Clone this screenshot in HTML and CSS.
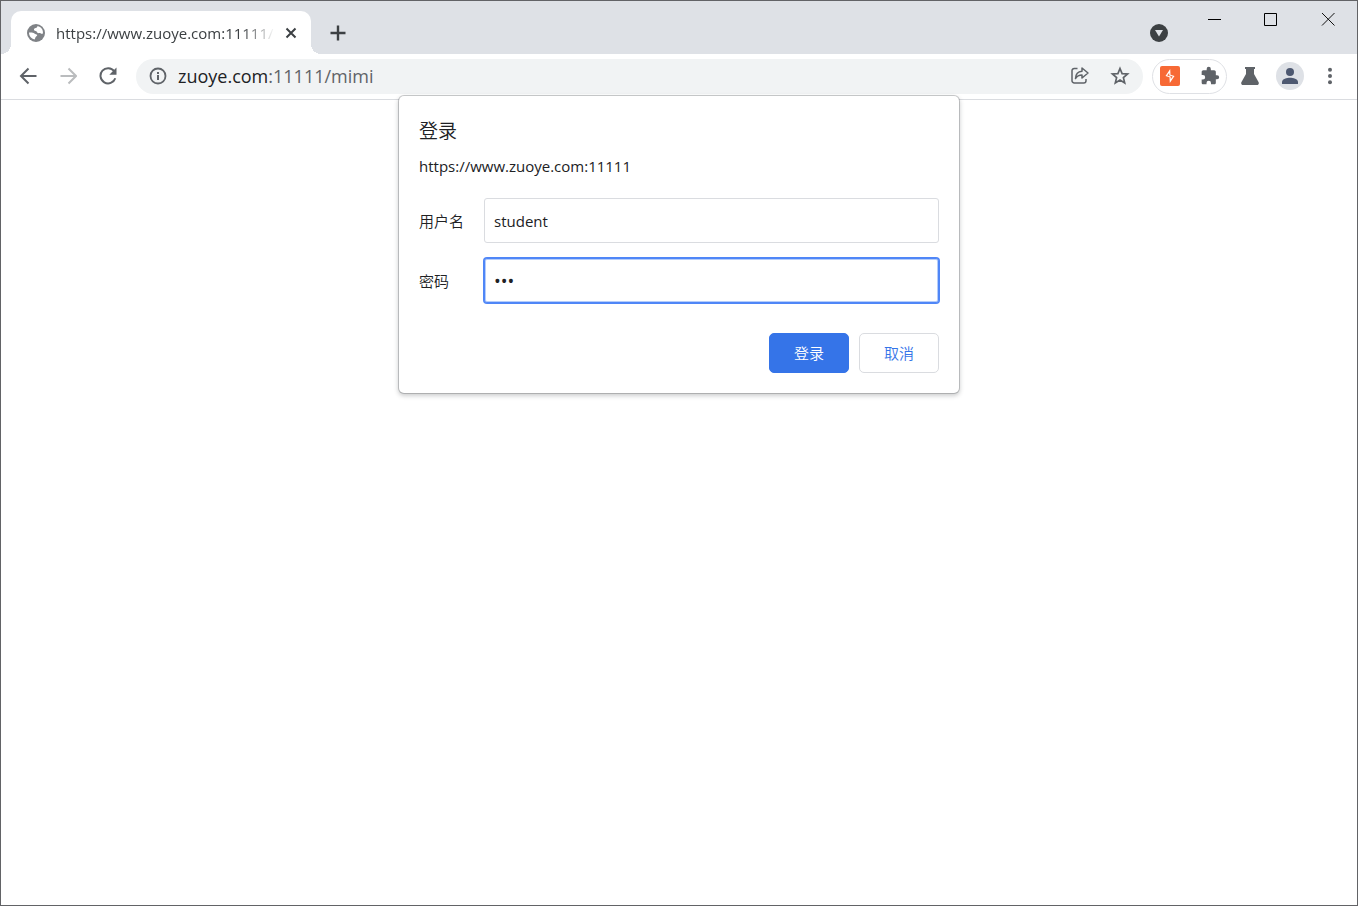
FILE: index.html
```html
<!DOCTYPE html>
<html lang="zh-CN">
<head>
<meta charset="utf-8">
<title>登录</title>
<link rel="stylesheet" href="styles.css">
</head>
<body>
<div class="window">
  <header class="tabstrip">
    <div class="tab">
      <svg class="favicon" viewBox="0 0 18 18" aria-hidden="true"><circle cx="9" cy="9" r="9" fill="#7f8286"/><path fill="#fff" d="M2 8.600C4 8.200 6.300 8.600 7.400 9.400 8.600 10.200 9.200 10 10.100 10.700 10.600 11.400 9.600 12.200 8.900 12.700 8.200 13.300 8.300 14.300 7.500 15.400 4.200 14.800 2 12.200 2 8.600ZM10.500 2.100C10.400 3.300 9.600 4 8.600 4.100 7.400 4.200 6.800 5.200 7 6 7.300 7.100 8.500 6.800 9.300 7.300 10.200 7.900 10 8.900 11 9.100 12.200 9.300 12.700 8.700 13.500 9.300 14.200 9.900 15 10 15.900 9.600 16.500 6 14.200 2.900 10.500 2.100Z"/></svg>
      <span class="tab-title">https://www.zuoye.com:11111/</span>
      <button class="icon-button tab-close" aria-label="关闭标签页"><svg width="12" height="12" viewBox="0 0 12 12"><path d="M1.500 1.500l9 9M10.500 1.500l-9 9" stroke="#3c4043" stroke-width="2" fill="none"/></svg></button>
    </div>
    <button class="icon-button new-tab" aria-label="新标签页"><svg width="16" height="16" viewBox="0 0 16 16"><path d="M8 .5v15M.5 8h15" stroke="#3c4043" stroke-width="2.400" fill="none"/></svg></button>
    <div class="spacer"></div>
    <button class="icon-button tab-search" aria-label="搜索标签页"><svg width="18" height="18" viewBox="0 0 18 18"><circle cx="9" cy="9" r="9" fill="#3c4043"/><path d="M5 6h8l-4 6.500z" fill="#dee1e6"/></svg></button>
    <div class="window-controls">
      <button class="icon-button" aria-label="最小化"><svg width="14" height="14" viewBox="0 0 14 14"><path d="M1 7.500h13" stroke="#000" fill="none"/></svg></button>
      <button class="icon-button" aria-label="最大化"><svg width="14" height="14" viewBox="0 0 14 14"><path d="M.5 1.500h12v12H.5z" stroke="#000" fill="none"/></svg></button>
      <button class="icon-button" aria-label="关闭"><svg width="14" height="14" viewBox="0 0 14 14"><path d="M1 1l12.500 12.500M13.500 1L1 13.500" stroke="#111" fill="none"/></svg></button>
    </div>
  </header>
  <nav class="toolbar">
    <div class="nav-buttons">
      <button class="icon-button" aria-label="后退"><svg width="18" height="18" viewBox="0 0 18 18"><path d="M17.500 9H2.500M9.500 1.500L2 9l7.500 7.500" stroke="#5f6368" stroke-width="2" fill="none"/></svg></button>
      <button class="icon-button" aria-label="前进"><svg width="18" height="18" viewBox="0 0 18 18"><path d="M1.500 9h15M9.500 1.500L17 9l-7.500 7.500" stroke="#babcbe" stroke-width="2" fill="none"/></svg></button>
      <button class="icon-button" aria-label="重新加载"><svg width="18" height="18" viewBox="0 0 18 18"><path d="M15.200 4.200A7.600 7.600 0 1 0 16.300 11.200" stroke="#5f6368" stroke-width="2" fill="none"/><path d="M17.500.5v7.200h-7.200z" fill="#5f6368"/></svg></button>
    </div>
    <div class="omnibox">
      <button class="icon-button site-info" aria-label="查看网站信息"><svg width="18" height="18" viewBox="0 0 18 18"><circle cx="9" cy="9" r="7.500" stroke="#5f6368" stroke-width="1.800" fill="none"/><path d="M9 8v5M9 5v2" stroke="#5f6368" stroke-width="2" fill="none"/></svg></button>
      <div class="url">zuoye.com<span class="url-path">:11111/mimi</span></div>
      <button class="icon-button" aria-label="分享"><svg width="20" height="20" viewBox="0 0 20 20"><path d="M7.500 2.500H4.200A2.200 2.200 0 0 0 2 4.700v10A2.300 2.300 0 0 0 4.300 17h9.400a2.300 2.300 0 0 0 2.300-2.300V13M5.500 12.500C5.700 8 8 5.500 12 5.200V2L18 7l-6 5V9C9 9 7 10 5.500 12.500Z" stroke="#5f6368" stroke-width="1.500" stroke-linejoin="round" fill="none"/></svg></button>
      <button class="icon-button" aria-label="为此标签页添加书签"><svg width="20" height="20" viewBox="0 0 20 20"><path d="M10 2.500l2.100 5.100 5.500.4-4.200 3.600 1.300 5.400L10 14.100 5.300 17l1.300-5.400L2.400 8l5.500-.4z" stroke="#5f6368" stroke-width="1.700" fill="none"/></svg></button>
    </div>
    <div class="extensions">
      <button class="icon-button" aria-label="扩展程序"><svg width="20" height="20" viewBox="0 0 20 20"><rect width="20" height="20" rx="2" fill="#f76935"/><path d="M10.200 3L5.500 10l4 1.200.3 5.800 4.700-7-4-1.200z" fill="#fff"/><path d="M9 7.500l-1.200 1.900 1.800.5M11 12.500l1.200-1.900-1.800-.5" stroke="#f76935" stroke-width=".8" fill="#f76935"/></svg></button>
      <button class="icon-button" aria-label="管理扩展程序"><svg width="20" height="20" viewBox="0 0 24 24"><path fill="#5f6368" d="M20.500 11H19V7c0-1.100-.9-2-2-2h-4V3.500a2.500 2.500 0 0 0-5 0V5H4c-1.100 0-2 .9-2 2v3.800h1.500a2.700 2.700 0 0 1 0 5.400H2V20c0 1.100.9 2 2 2h3.800v-1.500a2.700 2.700 0 0 1 5.400 0V22H17c1.100 0 2-.9 2-2v-4h1.500a2.500 2.500 0 0 0 0-5z"/></svg></button>
    </div>
    <div class="actions">
      <button class="icon-button" aria-label="实验"><svg width="18" height="18" viewBox="0 0 18 18"><path fill="#5f6368" d="M4 0h10v2h-1v5l4.500 8c.8 1.500 0 3-1.500 3H2C.5 18-.3 16.500.5 15L5 7V2H4z"/></svg></button>
      <button class="icon-button" aria-label="个人资料"><svg width="28" height="28" viewBox="0 0 28 28"><circle cx="14" cy="14" r="14" fill="#dee1e6"/><circle cx="14" cy="10" r="4" fill="#4d5870"/><path d="M6 22v-2C6 17 11 15.800 14 15.800s8 1.200 8 4.200v2z" fill="#4d5870"/></svg></button>
      <button class="icon-button" aria-label="菜单"><svg width="18" height="18" viewBox="0 0 18 18"><g fill="#5f6368"><circle cx="9" cy="2.800" r="2"/><circle cx="9" cy="9" r="2"/><circle cx="9" cy="15.200" r="2"/></g></svg></button>
    </div>
  </nav>
  <main class="page">
    <form class="dialog" role="dialog" aria-labelledby="login-title">
      <h1 class="dialog-title" id="login-title">登录</h1>
      <p class="dialog-origin">https://www.zuoye.com:11111</p>
      <div class="fields">
        <label for="username">用户名</label>
        <input class="field" id="username" type="text" value="student" spellcheck="false">
        <label for="password">密码</label>
        <input class="field field-active" id="password" type="password" value="123">
      </div>
      <div class="dialog-actions">
        <button class="action action-primary" type="submit">登录</button>
        <button class="action" type="button">取消</button>
      </div>
    </form>
  </main>
</div>
</body>
</html>
```
FILE: styles.css
```css
* {
  box-sizing: border-box;
}

body {
  margin: 0;
  font-family: "Open Sans", "Noto Sans CJK SC", sans-serif;
  font-size: 15px;
  color: #202124;
  background: #fff;
}

.window {
  display: flex;
  flex-direction: column;
  min-height: 100vh;
  border: 1px solid #626366;
}

.icon-button {
  display: flex;
  align-items: center;
  justify-content: center;
  flex: none;
  padding: 0;
  border: 0;
  background: none;
}

.tabstrip {
  display: flex;
  align-items: center;
  height: 53px;
  padding-left: 10px;
  background: #dee1e6;
}

.tab {
  position: relative;
  display: flex;
  align-items: center;
  align-self: flex-end;
  width: 300px;
  height: 43px;
  padding: 0 12px 0 16px;
  border-radius: 10px 10px 0 0;
  background: #fff;
}

.tab::before,
.tab::after {
  content: "";
  position: absolute;
  bottom: 0;
  width: 10px;
  height: 10px;
}

.tab::before {
  right: 100%;
  background: radial-gradient(circle at 0 0, #dee1e6 10px, #fff 10px);
}

.tab::after {
  left: 100%;
  background: radial-gradient(circle at 100% 0, #dee1e6 10px, #fff 10px);
}

.favicon {
  flex: none;
  width: 18px;
  height: 18px;
  margin-right: 11px;
}

.tab-title {
  flex: 1;
  white-space: nowrap;
  color: #3c4043;
  mask-image: linear-gradient(to right, #000 85%, transparent);
}

.tab-close {
  width: 16px;
  height: 16px;
  margin-left: 8px;
}

.new-tab {
  width: 28px;
  height: 28px;
  margin: 10px 0 0 13px;
}

.spacer {
  flex: 1;
}

.tab-search {
  margin: 11px 17px 0 0;
}

.window-controls {
  display: flex;
  align-self: flex-start;
  margin-right: 1px;
}

.window-controls .icon-button {
  width: 57px;
  height: 36px;
}

.toolbar {
  display: flex;
  align-items: center;
  height: 46px;
  padding: 0 7px;
  border-bottom: 1px solid #dadce0;
}

.nav-buttons,
.actions {
  display: flex;
}

.nav-buttons .icon-button,
.actions .icon-button,
.omnibox .icon-button,
.extensions .icon-button {
  width: 40px;
  height: 35px;
  padding-bottom: 1px;
}

.omnibox {
  display: flex;
  align-items: center;
  flex: 1;
  height: 35px;
  margin: 0 9px 0 8px;
  padding: 0 3px 0 13px;
  border-radius: 18px;
  background: #f1f3f4;
}

.omnibox .site-info {
  width: 18px;
  margin-right: 11px;
}

.url {
  flex: 1;
  font-size: 18px;
  line-height: 35px;
}

.url-path {
  color: #5f6368;
}

.extensions {
  display: flex;
  align-items: center;
  justify-content: center;
  width: 75px;
  height: 35px;
  margin-right: 3px;
  border: 1px solid #dfe1e5;
  border-radius: 18px;
}

.page {
  position: relative;
  flex: 1;
}

.dialog {
  position: absolute;
  top: -4px;
  right: 0;
  left: 0;
  width: 560px;
  max-width: 100%;
  margin: 0 auto;
  padding: 20px;
  border-radius: 5px;
  background: #fff;
  box-shadow: 0 0 0 1px rgba(60, 64, 67, 0.25), 0 2px 4px 1px rgba(60, 64, 67, 0.25);
}

.dialog-title {
  margin: 0;
  font-family: "Noto Sans CJK SC", sans-serif;
  font-size: 19px;
  font-weight: 350;
  line-height: 28px;
}

.dialog-origin {
  margin: 11px 0 21px;
  line-height: 22px;
}

.fields {
  display: grid;
  grid-template-columns: auto 1fr;
  align-items: center;
  gap: 15px 20px;
}

.fields label {
  font-weight: 350;
}

.field {
  width: 100%;
  height: 45px;
  padding: 0 9px;
  border: 1px solid #dadce0;
  border-radius: 3px;
  outline: 0;
  background: #fff;
  color: #202124;
  font: inherit;
}

.field-active {
  border-color: #4f86f7;
  box-shadow: 0 0 0 1px #4f86f7, inset 0 0 0 1px #b5cdfb;
  font-size: 18px;
}

.dialog-actions {
  display: flex;
  justify-content: flex-end;
  gap: 10px;
  margin-top: 30px;
}

.action {
  width: 80px;
  height: 40px;
  padding: 0 0 2px;
  border: 1px solid #dadce0;
  border-radius: 5px;
  background: #fff;
  color: #3574e8;
  font: inherit;
  font-weight: 350;
}

.action-primary {
  border-color: #3574e8;
  background: #3574e8;
  color: #fff;
}
```
